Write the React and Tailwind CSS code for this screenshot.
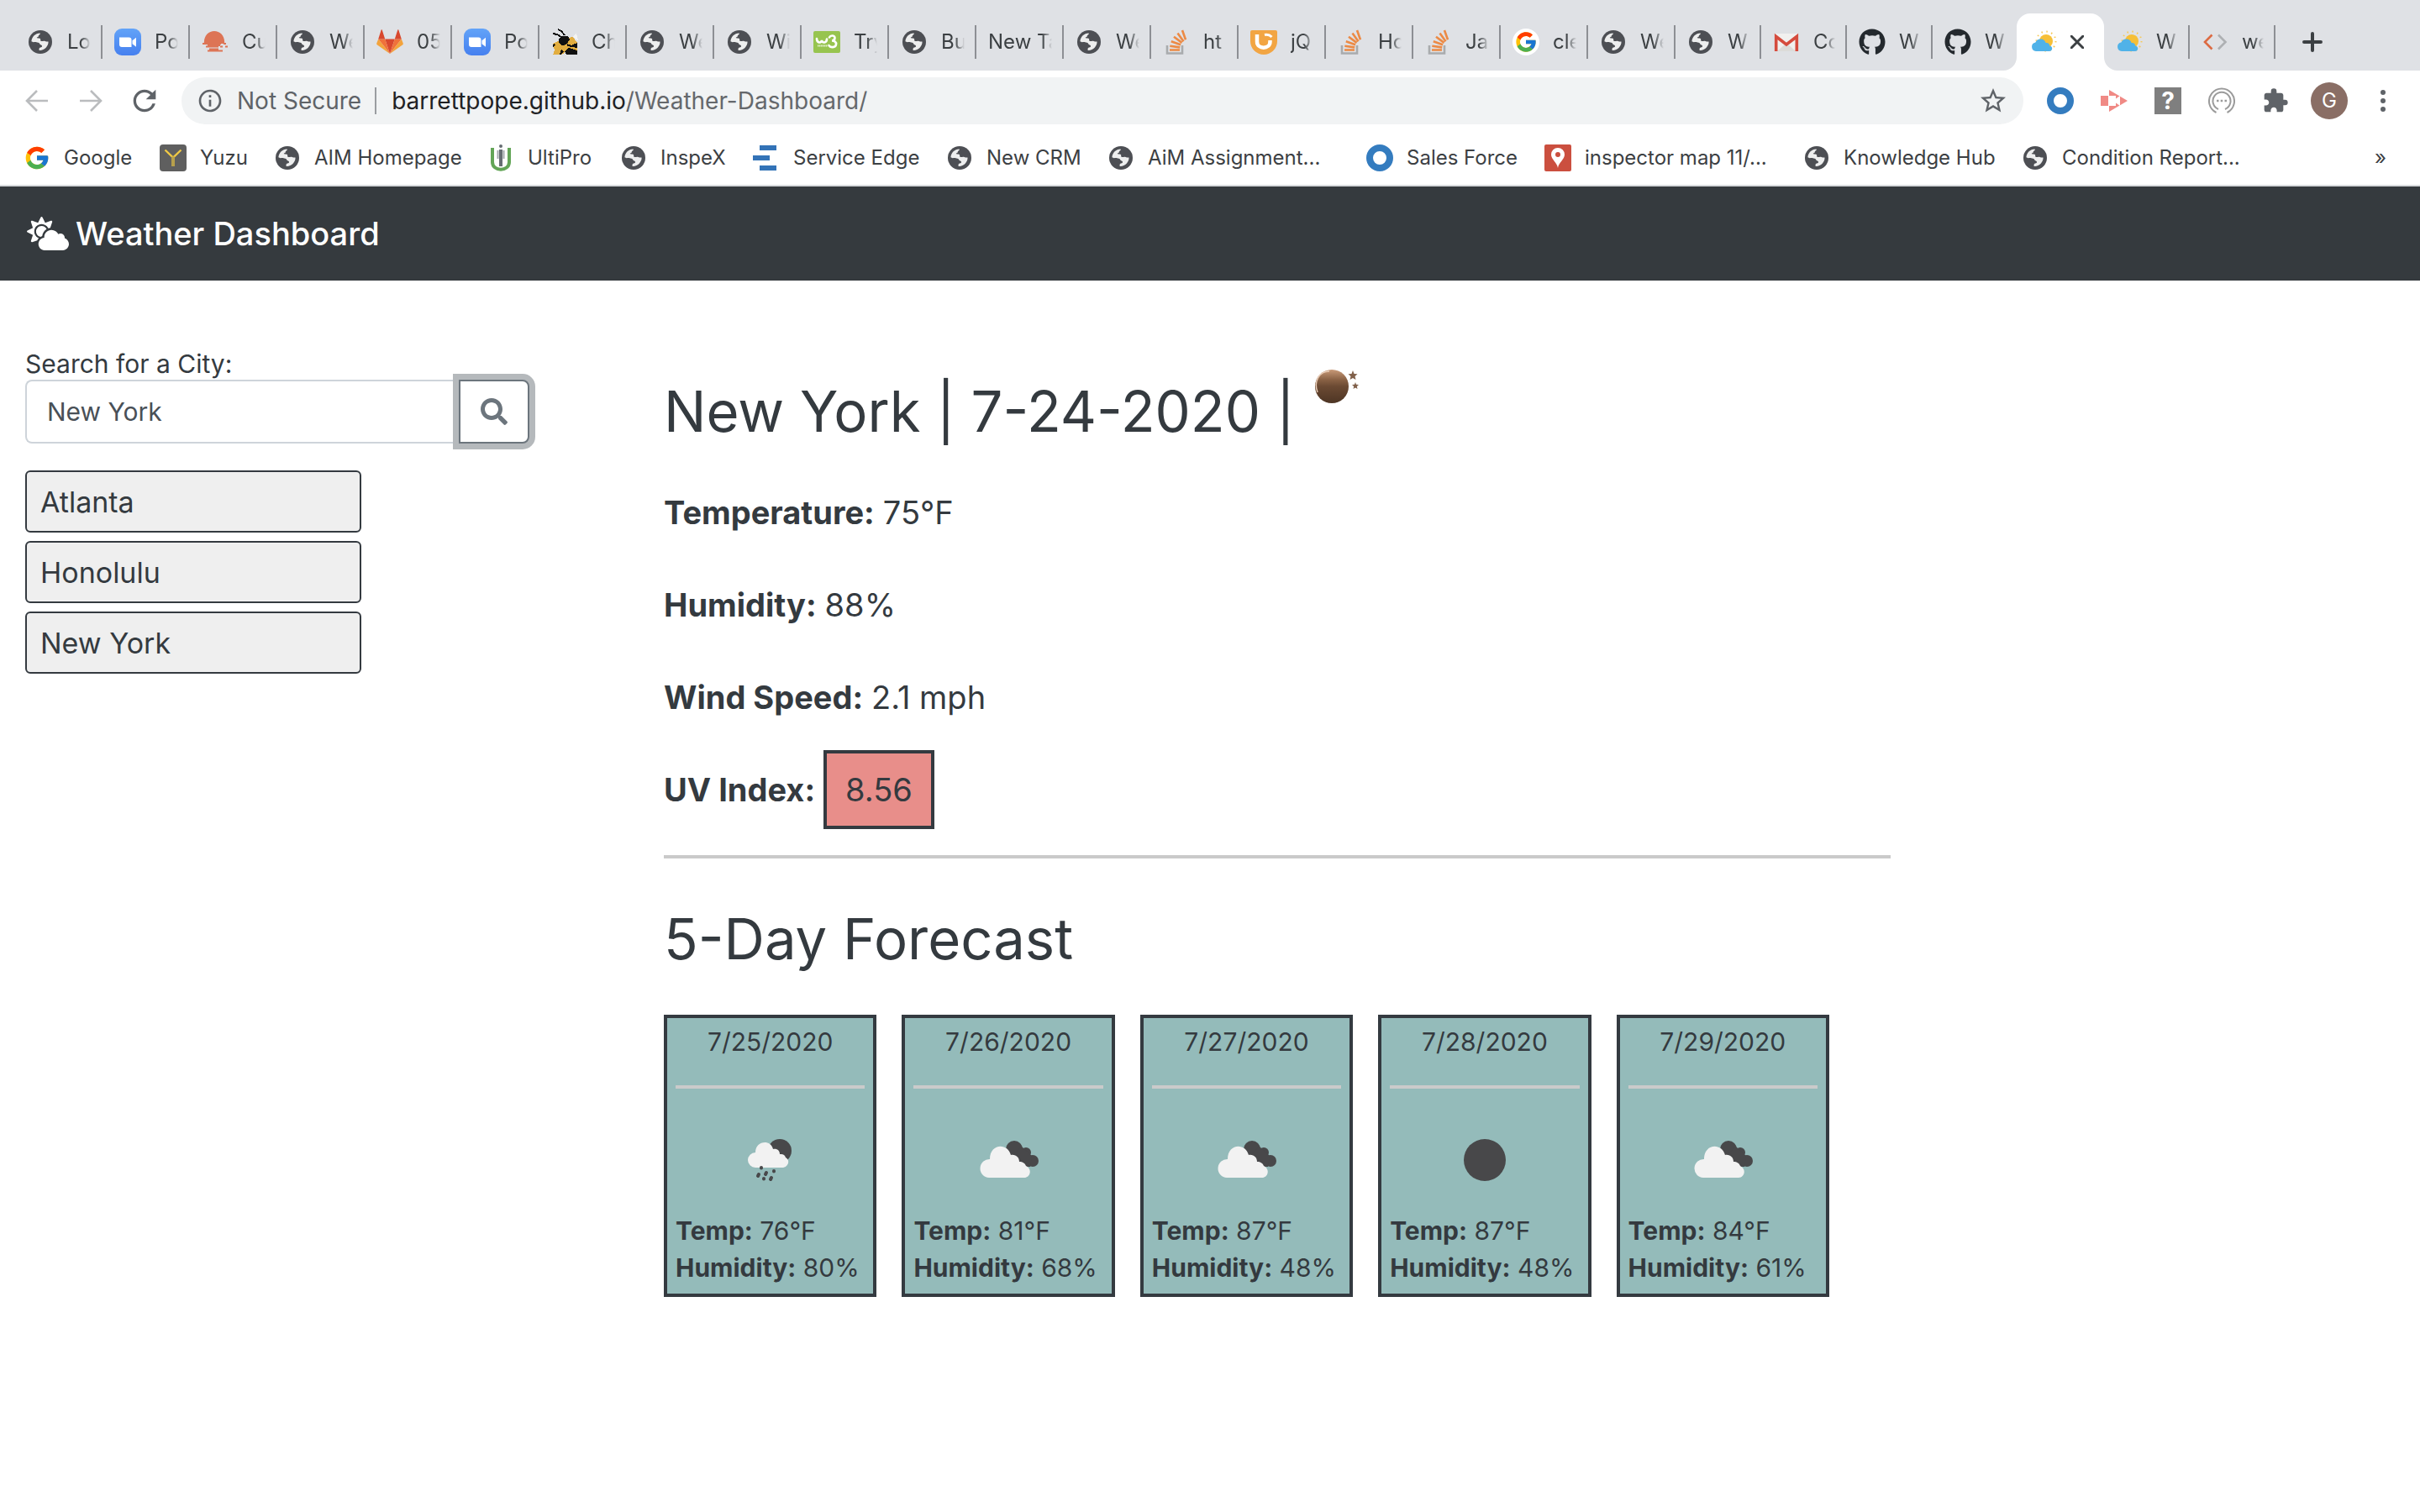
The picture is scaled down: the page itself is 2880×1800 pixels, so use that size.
import React from 'react';
import { FaCloudSun, FaSearch, FaGithub } from 'react-icons/fa';
import { FcGoogle } from 'react-icons/fc';
import { MdExtension, MdInfoOutline, MdStarBorder, MdRefresh } from 'react-icons/md';

/* ---------- favicons ---------- */

function Globe() {
  return (
    <svg viewBox="0 0 32 32" className="size-8 shrink-0" aria-hidden="true">
      <circle cx="16" cy="16" r="14" fill="#4d4f54" />
      <path
        d="M5.4 15.2C5.8 9.6 10.2 5.6 15.6 5.4c.6 1-.2 1.700-1.200 2.300-.8.6-.4 1.300-.9 2-.5.500-1.700.600-1.700 1.300.1.700 3.900.300 4.300 1.200.300.900-.300 2 .5 2.600 1.200.900 3.600-.700 5 .300 1.500 1 2.600-.1 3.900.500.400 2.300-1 5.300-2.800 7.100-1.800 1.900-4.900 3.400-8 3.200-.300-1-.3-2.500.7-3.100 1-.5 2.300-.4 2.600-1.500.300-1.200-.7-1.800-1.800-2-1-.2-1-1.500-1.900-2.200-2.100-1.700-5.900.1-8.900-1.900z"
        fill="#fff"
        fillOpacity="0.9"
      />
    </svg>
  );
}

function Zoom() {
  return (
    <svg viewBox="0 0 32 32" className="size-8 shrink-0" aria-hidden="true">
      <defs>
        <linearGradient id="zoomBlue" x1="0" y1="0" x2="0" y2="1">
          <stop offset="0" stopColor="#62a3f8" />
          <stop offset="1" stopColor="#4680ef" />
        </linearGradient>
      </defs>
      <rect width="32" height="32" rx="9" fill="url(#zoomBlue)" />
      <path d="M6 10.500h11.500a3 3 0 0 1 3 3V22H9a3 3 0 0 1-3-3z" fill="#fff" />
      <path d="M21.500 14.200 26 10.700v11l-4.500-3.500z" fill="#fff" />
    </svg>
  );
}

function Sunset() {
  return (
    <svg viewBox="0 0 32 32" className="size-8 shrink-0" aria-hidden="true" fill="#dd7455">
      <path d="M3 18C2 9 8 3 15 3s13 6 12 15z" />
      <path
        d="M1 18h22M26 18h3M5 21.500h15M22 21.500h3M28 21.500h3M9 24.500h11M7 26.500h18"
        stroke="#dd7455"
        strokeWidth="2"
      />
      <path d="M7 20h15" stroke="#dd7455" strokeWidth="2" />
    </svg>
  );
}

function Gitlab() {
  return (
    <svg viewBox="0 0 32 32" className="size-8 shrink-0" aria-hidden="true">
      <path d="M16 30 10.200 12.500h11.600z" fill="#d8482e" />
      <path d="M16 30 10.200 12.500H2.200zM16 30l5.800-17.500h8z" fill="#f0713a" />
      <path d="M2.200 12.500.2 17.800c-.2.600 0 1.200.5 1.500L16 30zM29.800 12.500l2 5.300c.2.600 0 1.200-.5 1.500L16 30z" fill="#f3a33c" />
      <path d="M2.200 12.500h8L6.700 1.500c-.2-.5-.8-.5-1 0zM29.800 12.500h-8l3.500-11c.2-.5.8-.5 1 0z" fill="#d8482e" />
    </svg>
  );
}

function Bee() {
  return (
    <svg viewBox="0 0 32 32" className="size-8 shrink-0" aria-hidden="true" shapeRendering="crispEdges">
      <path d="M2 18l6-3 5 3 7-7 6-1 5 7v14H24l-5-4-7 4H2l2-5z" fill="#e2ad3f" />
      <path d="M9 13l3-4h8l2 4-4 6-5 1-4-3zM19 18l5 2 7-3v6l-7-1-5-1zM16 27l5-4 10 3v5H18z" fill="#111" />
      <path d="M12 25l3 2-3 4h-2zM2 19l2-1 1 2-3 2z" fill="#111" />
      <path d="M2 6l5 1 5 3M8 1l4 2 4 5" stroke="#111" strokeWidth="2" fill="none" />
      <path d="M26 9l4-3 2 8-4-2z" fill="#f3f3f3" />
    </svg>
  );
}

function W3() {
  return (
    <svg viewBox="0 0 32 32" className="size-8 shrink-0" aria-hidden="true">
      <rect y="3" width="32" height="26" rx="2" fill="#97c44f" />
      <path d="M4 12c0 5 5 6 6 2 1 4 6 3 6-1.500" stroke="#fff" strokeWidth="2.600" fill="none" strokeLinecap="round" />
      <path d="M19 10.500c1.500-3 7-2.500 6.500 1-.2 2-2 3-3.500 3 3 0 5.500 1.500 5 4.500-.6 4-7 4-8.500 1" stroke="#fff" strokeWidth="2.600" fill="none" strokeLinecap="round" />
      <path d="M5 20.500h12" stroke="#e3f0cd" strokeWidth="2" strokeDasharray="1.500 .5" />
    </svg>
  );
}

function StackOverflow() {
  return (
    <svg viewBox="0 0 32 32" className="size-8 shrink-0" aria-hidden="true" fill="none">
      <path d="M5 20v9.500h18V20" stroke="#a9abad" strokeWidth="2.600" />
      <path d="M8 25.500h12M8.300 20.800l11.900 1.600M9.800 15.300l11.300 4M13 9.800l9.600 7.100M17.500 5.500l7 9.700M23 2l4 11.300" stroke="#ec8a45" strokeWidth="2.600" />
    </svg>
  );
}

function JqueryUi() {
  return (
    <svg viewBox="0 0 32 32" className="size-8 shrink-0" aria-hidden="true">
      <path d="M2 2h28a2 2 0 0 1 2 2v11a16 16 0 0 1-32 0V4a2 2 0 0 1 2-2z" fill="#f2a543" />
      <path d="M8 7v8.500c0 9.500 15.500 9.500 15.500 0V14" stroke="#fff" strokeWidth="4.500" fill="none" />
      <path d="M17 7.500c4-1 6 0 8.500 2.500" stroke="#fff" strokeWidth="3" fill="none" />
    </svg>
  );
}

function GoogleRound() {
  return (
    <span className="flex size-8 shrink-0 items-center justify-center rounded-full bg-white">
      <FcGoogle className="size-7" />
    </span>
  );
}

function Gmail() {
  return (
    <svg viewBox="0 0 32 32" className="size-8 shrink-0" aria-hidden="true">
      <rect x="2" y="6" width="28" height="21" rx="1.500" fill="#f1f0ef" />
      <path d="M5 27l11-10 11 10z" fill="#dcdbd9" />
      <path d="M3.700 27V9.500L16 19 28.300 9.500V27" fill="none" stroke="#d54b3d" strokeWidth="3.600" />
    </svg>
  );
}

function Github() {
  return <FaGithub className="size-8 shrink-0 text-[#24292e]" />;
}

function PartlySunny() {
  return (
    <svg viewBox="0 0 32 32" className="size-8 shrink-0" aria-hidden="true">
      <circle cx="19" cy="15" r="8" fill="#f6bf37" />
      <circle cx="19" cy="15" r="11.500" fill="none" stroke="#f6c95a" strokeWidth="2" strokeDasharray="1.500 4.520" />
      <path d="M7 27a5.300 5.300 0 0 1-.6-10.500A6.500 6.500 0 0 1 18.600 17c3.200-.6 4.800 2 4.600 3.500 4.300.5 3.800 6.500-.2 6.500z" fill="#50b2e8" />
    </svg>
  );
}

function CodeBrackets() {
  return (
    <svg viewBox="0 0 32 32" className="size-8 shrink-0" aria-hidden="true" fill="none" strokeWidth="2.600">
      <path d="M12.500 7.500 4 16l8.500 8.500" stroke="#dc6b43" />
      <path d="M20 7.500l8.500 8.500-8.500 8.500" stroke="#aeb0b3" />
    </svg>
  );
}

function YuzuIcon() {
  return (
    <svg viewBox="0 0 32 32" className="size-8 shrink-0" aria-hidden="true">
      <rect width="32" height="32" rx="4" fill="#5f5f5f" />
      <path d="M6.500 6.500 16 15.500l9.500-9" fill="none" stroke="#f0c944" strokeWidth="2.400" />
      <path d="M16 14.500V26" stroke="#b7a04c" strokeWidth="4" />
    </svg>
  );
}

function UltiProIcon() {
  return (
    <svg viewBox="0 0 32 32" className="size-8 shrink-0" aria-hidden="true" fill="none">
      <path d="M6 4v17c0 11.500 20 11.500 20 0V4" stroke="#63a557" strokeWidth="4" />
      <path d="M16 6v20" stroke="#666d73" strokeWidth="4" />
      <path d="M12.500 7v10M19.500 7v10" stroke="#a4a9ad" strokeWidth="2" />
      <circle cx="16" cy="2" r="2" fill="#666d73" />
    </svg>
  );
}

function ServiceEdgeIcon() {
  return (
    <svg viewBox="0 0 32 32" className="size-8 shrink-0" aria-hidden="true" fill="#3373b7">
      <path d="M8 1h20v6H8zM0 13h20v6H0zM8 25h20v6H8z" />
    </svg>
  );
}

function BlueRing() {
  return (
    <svg viewBox="0 0 32 32" className="size-8 shrink-0" aria-hidden="true">
      <circle cx="16" cy="16" r="12" fill="none" stroke="#347cbf" strokeWidth="8" />
    </svg>
  );
}

function MapPin() {
  return (
    <svg viewBox="0 0 32 32" className="size-8 shrink-0" aria-hidden="true">
      <rect width="32" height="32" rx="2" fill="#cb4f3f" />
      <path d="M16 28C15 21 8 18 8 12a8 8 0 0 1 16 0c0 6-7 9-8 16z" fill="#fff" />
      <circle cx="16" cy="12" r="3" fill="#cb4f3f" />
    </svg>
  );
}

/* ---------- browser chrome ---------- */

const tabs = [
  { Icon: Globe, title: 'Lo' },
  { Icon: Zoom, title: 'Po' },
  { Icon: Sunset, title: 'Cu' },
  { Icon: Globe, title: 'We' },
  { Icon: Gitlab, title: '05' },
  { Icon: Zoom, title: 'Po' },
  { Icon: Bee, title: 'Ch' },
  { Icon: Globe, title: 'We' },
  { Icon: Globe, title: 'Wi' },
  { Icon: W3, title: 'Try' },
  { Icon: Globe, title: 'Bu' },
  { title: 'New Ta' },
  { Icon: Globe, title: 'We' },
  { Icon: StackOverflow, title: 'ht' },
  { Icon: JqueryUi, title: 'jQ' },
  { Icon: StackOverflow, title: 'Ho' },
  { Icon: StackOverflow, title: 'Ja' },
  { Icon: GoogleRound, title: 'cle' },
  { Icon: Globe, title: 'We' },
  { Icon: Globe, title: 'W', narrow: true },
  { Icon: Gmail, title: 'Co', narrow: true },
  { Icon: Github, title: 'W', narrow: true },
  { Icon: Github, title: 'W', narrow: true, noRule: true },
  { Icon: PartlySunny, title: 'Weather Dashboard', active: true },
  { Icon: PartlySunny, title: 'W', narrow: true },
  { Icon: CodeBrackets, title: 'we', narrow: true },
];

function Tab({ Icon, title, narrow, noRule }) {
  return (
    <button
      type="button"
      className={
        'flex h-10 shrink-0 items-center gap-4 border-r-2 pr-3 pl-3.5 text-2xl text-[#3c4043] ' +
        (narrow ? 'w-[102px] ' : 'w-[104px] ') +
        (noRule ? 'border-transparent' : 'border-[#8d8f94]')
      }
    >
      {Icon && <Icon />}
      <span className="min-w-0 flex-1 overflow-hidden text-left whitespace-nowrap [mask-image:linear-gradient(to_right,black_calc(100%-12px),transparent)]">
        {title}
      </span>
    </button>
  );
}

function ActiveTab({ Icon, title }) {
  return (
    <div className="relative -ml-0.5 flex h-[68px] w-[104px] shrink-0 items-center gap-4 self-end rounded-t-2xl bg-white pl-4">
      <svg viewBox="0 0 16 16" className="absolute bottom-0 -left-4 size-4" aria-hidden="true">
        <path d="M16 0v16H0A16 16 0 0 0 16 0z" fill="#fff" />
      </svg>
      <svg viewBox="0 0 16 16" className="absolute -right-4 bottom-0 size-4" aria-hidden="true">
        <path d="M0 0v16h16A16 16 0 0 1 0 0z" fill="#fff" />
      </svg>
      <Icon />
      <button type="button" aria-label={'Close ' + title} className="flex size-4">
        <svg viewBox="0 0 16 16" className="size-4" aria-hidden="true">
          <path d="M1 1l14 14M15 1 1 15" stroke="#3c4043" strokeWidth="3" strokeLinecap="round" />
        </svg>
      </button>
    </div>
  );
}

function TabStrip() {
  return (
    <div className="flex h-[84px] items-center bg-[#dfe1e5] pt-4 pl-[18px]">
      {tabs.map((tab, i) => (tab.active ? <ActiveTab key={i} {...tab} /> : <Tab key={i} {...tab} />))}
      <button type="button" aria-label="New tab" className="ml-8">
        <svg viewBox="0 0 24 24" className="size-6" aria-hidden="true">
          <path d="M12 2v20M2 12h20" stroke="#3c4043" strokeWidth="4" strokeLinecap="round" />
        </svg>
      </button>
    </div>
  );
}

function AddressBar() {
  return (
    <div className="flex h-[72px] items-center gap-8 bg-white px-7">
      <button type="button" aria-label="Back">
        <svg viewBox="0 0 32 32" className="size-8" fill="none" stroke="#babcbe" strokeWidth="2.600" aria-hidden="true">
          <path d="M29 16H4M16 4 4 16l12 12" />
        </svg>
      </button>
      <button type="button" aria-label="Forward">
        <svg viewBox="0 0 32 32" className="size-8" fill="none" stroke="#babcbe" strokeWidth="2.600" aria-hidden="true">
          <path d="M3 16h25M16 4l12 12-12 12" />
        </svg>
      </button>
      <button type="button" aria-label="Reload" className="-mx-1">
        <MdRefresh className="size-10 text-[#5f6368]" />
      </button>
      <div className="-mx-1 flex h-14 min-w-0 flex-1 items-center rounded-full bg-[#f1f3f4] px-[18px] text-[28px]">
        <MdInfoOutline className="size-8 text-[#5f6368]" />
        <span className="ml-4 text-[#5f6368]">Not Secure</span>
        <span className="mx-4 h-8 w-0.5 bg-[#9a9da1]" />
        <span className="ml-0.5 flex-1 text-[#65686c]">
          <span className="text-[#202124]">barrettpope.github.io</span>/Weather-Dashboard/
        </span>
        <button type="button" aria-label="Bookmark this page">
          <MdStarBorder className="size-9 text-[#5f6368]" />
        </button>
      </div>
      <button type="button" aria-label="Sales Force">
        <BlueRing />
      </button>
      <button type="button" aria-label="Screen recorder">
        <svg viewBox="0 0 32 32" className="size-8" aria-hidden="true">
          <path d="M0 10h9v12H0zM10 3l22 13-22 13z" fill="#f08a85" />
          <path d="M10 10h8v3.500l5-3.500v12l-5-3.500V22h-8z" fill="#fff" />
        </svg>
      </button>
      <button
        type="button"
        aria-label="Unknown extension"
        className="flex size-8 items-center justify-center bg-[#7f7f7f] text-[28px] leading-8 font-bold text-white"
      >
        ?
      </button>
      <button type="button" aria-label="Podcast extension">
        <svg viewBox="0 0 32 32" className="size-8" fill="none" stroke="#9b9b9b" strokeWidth="2" aria-hidden="true">
          <path d="M9.500 30a15 15 0 1 1 13 0" />
          <path d="M12 26a10.500 10.500 0 1 1 8 0" />
          <path d="M10 16h2.500M14.700 16h2.500M19.500 16H22" strokeWidth="2.500" />
        </svg>
      </button>
      <button type="button" aria-label="Extensions">
        <MdExtension className="size-8 text-[#5f6368]" />
      </button>
      <button
        type="button"
        aria-label="Profile G"
        className="-mx-1.5 flex size-11 items-center justify-center rounded-full bg-[#8a6e65] text-2xl text-white"
      >
        G
      </button>
      <button type="button" aria-label="Menu">
        <svg viewBox="0 0 32 32" className="size-8" fill="#5f6368" aria-hidden="true">
          <circle cx="16" cy="6" r="3" />
          <circle cx="16" cy="16" r="3" />
          <circle cx="16" cy="26" r="3" />
        </svg>
      </button>
    </div>
  );
}

const bookmarks = [
  { Icon: FcGoogle, label: 'Google', width: 'w-[162px]' },
  { Icon: YuzuIcon, label: 'Yuzu', width: 'w-[136px]' },
  { Icon: Globe, label: 'AIM Homepage', width: 'w-[254px]' },
  { Icon: UltiProIcon, label: 'UltiPro', width: 'w-[158px]' },
  { Icon: Globe, label: 'InspeX', width: 'w-[158px]' },
  { Icon: ServiceEdgeIcon, label: 'Service Edge', width: 'w-[230px]' },
  { Icon: Globe, label: 'New CRM', width: 'w-[192px]' },
  { Icon: Globe, label: 'AiM Assignment...', width: 'w-[308px]' },
  { Icon: BlueRing, label: 'Sales Force', width: 'w-[212px]' },
  { Icon: MapPin, label: 'inspector map 11/...', width: 'w-[308px]' },
  { Icon: Globe, label: 'Knowledge Hub', width: 'w-[260px]' },
  { Icon: Globe, label: 'Condition Report...', width: 'w-[308px]' },
];

function BookmarksBar() {
  return (
    <nav aria-label="Bookmarks" className="flex h-[66px] items-center border-b-2 border-[#d9dbde] bg-white px-7 text-2xl text-[#3c4043]">
      {bookmarks.map(({ Icon, label, width }) => (
        <a key={label} href="#" className={'flex shrink-0 items-center gap-4 whitespace-nowrap ' + width}>
          <Icon className="size-8 shrink-0" />
          {label}
        </a>
      ))}
      <button type="button" aria-label="More bookmarks" className="mr-3 ml-auto">
        »
      </button>
    </nav>
  );
}

/* ---------- weather drawings ---------- */

function MoonStars() {
  return (
    <svg viewBox="0 0 100 100" className="size-[100px] shrink-0" role="img" aria-label="Clear night">
      <defs>
        <linearGradient id="moon" x1="0" y1="0" x2="0" y2="1">
          <stop offset="0" stopColor="#c99a78" />
          <stop offset="0.300" stopColor="#8a6245" />
          <stop offset="0.500" stopColor="#6b4a33" />
          <stop offset="1" stopColor="#4d3524" />
        </linearGradient>
      </defs>
      <circle cx="44" cy="50" r="20" fill="url(#moon)" />
      <path d="M27 57c-5-13 2-25 14-25" fill="none" stroke="#e9cdb8" strokeWidth="1.500" />
      <path d="M69 31l1.500 4 4 .3-3 2.700 1 4-3.500-2-3.500 2 1-4-3-2.700 4-.3zM72 45l1 2.800 3 .2-2.200 2 .700 3-2.500-1.500-2.500 1.500.7-3-2.200-2 3-.2z" fill="#80604a" />
    </svg>
  );
}

function RainNight() {
  return (
    <svg viewBox="0 0 100 100" className="size-[100px]" role="img" aria-label="Showers">
      <circle cx="61" cy="40" r="14" fill="#48484a" />
      <path
        d="M32 60a9 9 0 0 1 0-18c0-14 18-16 21-4 5-1 8 2 8 6 4-.5 6 1 7 4 6 3 3 12-4 12z"
        fill="#f2f2f2"
      />
      <g stroke="#48484a" strokeWidth="4" strokeLinecap="round">
        <path d="M39 60v.5M36 68l-1 2M45 66l-1 2M54 64v.5M42 73v.5M51 72l-1 2" />
      </g>
    </svg>
  );
}

function BrokenClouds() {
  return (
    <svg viewBox="0 0 100 100" className="size-[100px]" role="img" aria-label="Broken clouds">
      <g fill="#48484a">
        <circle cx="57" cy="38" r="10" />
        <circle cx="71" cy="42" r="6" />
        <circle cx="79" cy="52" r="7" />
        <path d="M55 45l11-10 12 11-2 13-10 0z" />
      </g>
      <path
        d="M27 72a11 11 0 0 1 1-22c0-19 21-20 25-5 6-1 10 3 10 8 4 0 7 2 8 5 8 4 5 14-2 14z"
        fill="#f2f2f2"
      />
    </svg>
  );
}

function ClearNight() {
  return (
    <svg viewBox="0 0 100 100" className="size-[100px]" role="img" aria-label="Clear">
      <circle cx="50" cy="51" r="25" fill="#48484a" />
    </svg>
  );
}

/* ---------- dashboard ---------- */

const cities = ['Atlanta', 'Honolulu', 'New York'];

const conditions = [
  { label: 'Temperature:', value: '75°F' },
  { label: 'Humidity:', value: '88%' },
  { label: 'Wind Speed:', value: '2.1 mph' },
];

const forecast = [
  { date: '7/25/2020', Icon: RainNight, temp: '76°F', humidity: '80%' },
  { date: '7/26/2020', Icon: BrokenClouds, temp: '81°F', humidity: '68%' },
  { date: '7/27/2020', Icon: BrokenClouds, temp: '87°F', humidity: '48%' },
  { date: '7/28/2020', Icon: ClearNight, temp: '87°F', humidity: '48%' },
  { date: '7/29/2020', Icon: BrokenClouds, temp: '84°F', humidity: '61%' },
];

function Sidebar() {
  return (
    <aside className="pt-20">
      <form onSubmit={(e) => e.preventDefault()}>
        <label htmlFor="city" className="block text-[30px] leading-[38px]">
          Search for a City:
        </label>
        <div className="flex h-[76px] max-w-[600px]">
          <input
            id="city"
            type="text"
            defaultValue="New York"
            className="min-w-0 flex-1 rounded-l-lg border-2 border-r-0 border-[#ced4da] bg-white px-6 text-[30px] text-[#495057] outline-none"
          />
          <button
            type="submit"
            aria-label="Search"
            className="flex w-[84px] items-center justify-center rounded-r-lg border-2 border-[#6c757d] bg-white text-[#6c757d] ring-[7px] ring-[#b5b9bc]"
          >
            <FaSearch className="size-8" />
          </button>
        </div>
      </form>
      <div className="mt-8 flex max-w-[400px] flex-col gap-2.5">
        {cities.map((city) => (
          <button
            key={city}
            type="button"
            className="h-[74px] rounded-md border-2 border-[#343a40] bg-[#efefef] px-4 text-left text-[34px]"
          >
            {city}
          </button>
        ))}
      </div>
    </aside>
  );
}

function ForecastCard({ date, Icon, temp, humidity }) {
  return (
    <article className="border-4 border-[#343a40] bg-[#94bbba] px-2.5 pt-1 pb-[9px]">
      <h3 className="text-center text-[30px] leading-[48px]">{date}</h3>
      <hr className="mt-7 border-t-4 border-[#cacaca]" />
      <div className="mt-[34px] flex justify-center">
        <Icon />
      </div>
      <p className="mt-[13px] text-[30px] leading-[44px] whitespace-nowrap">
        <b>Temp:</b> {temp}
        <br />
        <b>Humidity:</b> {humidity}
      </p>
    </article>
  );
}

function CurrentWeather() {
  return (
    <main className="pt-[76px]">
      <div className="flex h-[145px] items-start">
        <h1 className="pt-9 text-[67px] leading-[88px] whitespace-nowrap">New York | 7-24-2020 |</h1>
        <MoonStars />
      </div>
      <dl className="text-[38px]">
        {conditions.map(({ label, value }) => (
          <div key={label} className="flex h-[110px] items-center gap-2.5">
            <dt className="font-bold">{label}</dt>
            <dd>{value}</dd>
          </div>
        ))}
        <div className="flex h-[110px] items-center gap-2.5">
          <dt className="font-bold">UV Index:</dt>
          <dd className="flex h-[94px] items-center border-4 border-[#343a40] bg-[#e88e8a] px-[22px]">8.56</dd>
        </div>
      </dl>
      <hr className="mt-[23px] border-t-4 border-[#cacaca]" />
      <h2 className="mt-[52px] text-[67px] leading-[88px]">5-Day Forecast</h2>
      <div className="mt-[46px] grid w-[95%] grid-cols-5 gap-[30px]">
        {forecast.map((day) => (
          <ForecastCard key={day.date} {...day} />
        ))}
      </div>
    </main>
  );
}

export default function App() {
  return (
    <div className="min-h-screen bg-white font-['Inter','Liberation_Sans',sans-serif] text-[#343a3f]">
      <TabStrip />
      <AddressBar />
      <BookmarksBar />
      <header className="flex h-28 items-center bg-[#353a3e] px-8">
        <a href="#" className="flex items-center gap-2 text-[38px] font-medium text-white">
          <FaCloudSun className="h-10 w-[50px]" />
          Weather Dashboard
        </a>
      </header>
      <div className="grid grid-cols-[760fr_1460fr_630fr] pl-[30px]">
        <Sidebar />
        <CurrentWeather />
      </div>
    </div>
  );
}
